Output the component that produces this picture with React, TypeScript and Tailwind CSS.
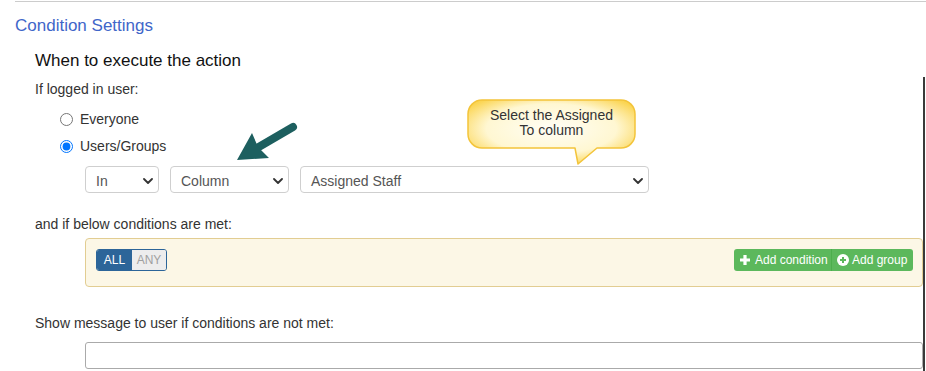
const Chevron = () => (
  <svg width="10" height="6" viewBox="0 0 10 6" className="shrink-0">
    <path d="M1 1l4 4 4-4" fill="none" stroke="#333" strokeWidth="1.8" strokeLinecap="round" strokeLinejoin="round" />
  </svg>
);

const FakeSelect = ({ value, width }: { value: string; width: string }) => (
  <div
    className={`${width} h-[27px] flex items-center justify-between pl-[10px] pr-[5px] pt-[3px] border border-[#cfcfcf] rounded-[4px] bg-white text-[14px] leading-[16px] text-[#555]`}
  >
    <span>{value}</span>
    <Chevron />
  </div>
);

const PlusIcon = () => (
  <svg width="12" height="12" viewBox="0 0 12 12" className="shrink-0">
    <path d="M6 1v10M1 6h10" stroke="#fff" strokeWidth="3.2" />
  </svg>
);

const PlusCircleIcon = () => (
  <svg width="12" height="12" viewBox="0 0 12 12" className="shrink-0">
    <circle cx="6" cy="6" r="6" fill="#fff" />
    <path d="M6 3v6M3 6h6" stroke="#5cb85c" strokeWidth="2" />
  </svg>
);

const Callout = () => (
  <div className="absolute left-[466px] top-[98px] w-[172px] h-[70px]">
    <svg width="172" height="70" viewBox="0 0 172 70" className="absolute inset-0">
      <defs>
        <radialGradient id="glow" cx="50%" cy="45%" r="60%">
          <stop offset="0%" stopColor="#fffef6" />
          <stop offset="65%" stopColor="#fff7d2" />
          <stop offset="100%" stopColor="#fbd553" />
        </radialGradient>
      </defs>
      <path
        d="M16 2H155A14 14 0 0 1 169 16V36A14 14 0 0 1 155 50H131L112 66L109 50H16A14 14 0 0 1 2 36V16A14 14 0 0 1 16 2Z"
        fill="url(#glow)"
        stroke="#f3c43a"
        strokeWidth="1.5"
        strokeLinejoin="round"
      />
    </svg>
    <div className="absolute left-0 top-[10px] w-[171px] text-center text-[14px] leading-[15px] text-[#333]">
      Select the Assigned
      <br />
      To column
    </div>
  </div>
);

const Arrow = () => (
  <svg width="70" height="45" viewBox="0 0 70 45" className="absolute left-[230px] top-[120px]">
    <path d="M63 7L27 28" stroke="#1d5f5f" strokeWidth="8" strokeLinecap="round" />
    <polygon points="7,40 22,13 28,27 39,38" fill="#1d5f5f" />
  </svg>
);

export default function App() {
  return (
    <div className="relative w-[926px] h-[371px] overflow-hidden bg-white font-['Liberation_Sans',Arial,sans-serif]">
      <div className="ml-[15px] mt-px h-px bg-[#cccccc]" />

      <h2 className="mt-[14px] pl-[15px] text-[17px] leading-[20px] text-[#3f66c9]">Condition Settings</h2>
      <h3 className="mt-[15px] pl-[35px] text-[17px] leading-[20px] text-[#111]">When to execute the action</h3>

      <div className="mt-[6px] w-[925px] border-r-2 border-[#3a3a3a] pb-[10px]">
        <p className="pt-[4px] pl-[35px] text-[14px] leading-[16px] text-[#333]">If logged in user:</p>

        <div className="mt-[14px] flex flex-col gap-[11px] text-[14px] leading-[16px] text-[#333]">
          <label className="flex items-center gap-[7px] ml-[60px]">
            <input type="radio" name="who" className="m-0 w-[13px] h-[13px]" />
            <span>Everyone</span>
          </label>
          <label className="flex items-center gap-[7px] ml-[60px]">
            <input type="radio" name="who" defaultChecked className="m-0 w-[13px] h-[13px]" />
            <span>Users/Groups</span>
          </label>
        </div>

        <div className="mt-[12px] ml-[85px] flex gap-[11px]">
          <FakeSelect value="In" width="w-[74px]" />
          <FakeSelect value="Column" width="w-[119px]" />
          <FakeSelect value="Assigned Staff" width="w-[349px]" />
        </div>

        <p className="mt-[23px] pl-[35px] text-[14px] leading-[16px] text-[#333]">and if below conditions are met:</p>

        <div className="mt-[6px] ml-[85px] h-[49px] flex items-start justify-between pt-[10px] pl-[10px] pr-[9px] border border-[#e2cd92] rounded-[4px] bg-[#fcf7e6]">
          <div className="flex h-[22px] rounded-[3px] border border-[#2c6599] overflow-hidden text-[12px] leading-[14px]">
            <span className="w-[35px] bg-[#2c6599] text-white flex items-center justify-center">ALL</span>
            <span className="w-[34px] bg-[#ededed] text-[#a0a0a0] flex items-center justify-center">ANY</span>
          </div>
          <div className="flex h-[22px] rounded-[3px] overflow-hidden bg-[#5cb85c] text-white text-[12px] leading-[14px]">
            <span className="w-[98px] flex items-center pl-[5px] gap-[4px] border-r border-[#4cae4c]">
              <PlusIcon />
              Add condition
            </span>
            <span className="w-[81px] flex items-center pl-[5px] gap-[3px]">
              <PlusCircleIcon />
              Add group
            </span>
          </div>
        </div>

        <p className="mt-[28px] pl-[35px] text-[14px] leading-[16px] text-[#333]">
          Show message to user if conditions are not met:
        </p>

        <div className="mt-[11px] ml-[85px] h-[27px] border border-[#aaaaaa] rounded-[3px] bg-white" />
      </div>

      <Arrow />
      <Callout />
    </div>
  );
}
